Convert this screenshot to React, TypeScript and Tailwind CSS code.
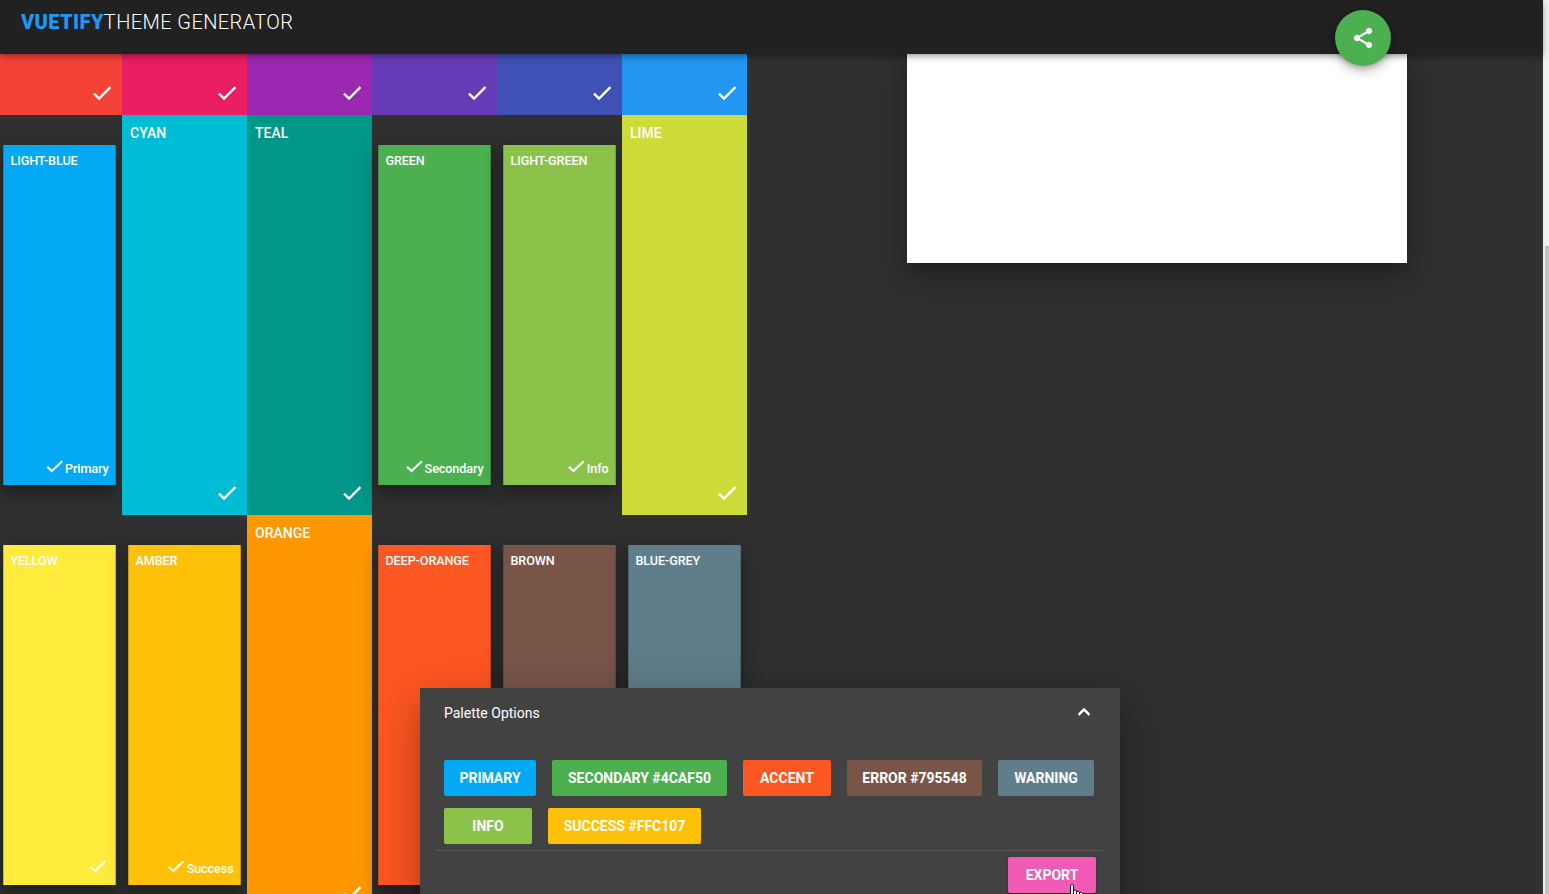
type Swatch = { name: string; bg: string; selected?: boolean; role?: string };

const swatches: Swatch[] = [
  { name: "RED", bg: "bg-[#f44336]" },
  { name: "PINK", bg: "bg-[#e91e63]" },
  { name: "PURPLE", bg: "bg-[#9c27b0]" },
  { name: "DEEP-PURPLE", bg: "bg-[#673ab7]" },
  { name: "INDIGO", bg: "bg-[#3f51b5]" },
  { name: "BLUE", bg: "bg-[#2196f3]" },
  { name: "LIGHT-BLUE", bg: "bg-[#03a9f4]", selected: true, role: "Primary" },
  { name: "CYAN", bg: "bg-[#00bcd4]" },
  { name: "TEAL", bg: "bg-[#009688]" },
  { name: "GREEN", bg: "bg-[#4caf50]", selected: true, role: "Secondary" },
  { name: "LIGHT-GREEN", bg: "bg-[#8bc34a]", selected: true, role: "Info" },
  { name: "LIME", bg: "bg-[#cddc39]" },
  { name: "YELLOW", bg: "bg-[#ffeb3b]", selected: true },
  { name: "AMBER", bg: "bg-[#ffc107]", selected: true, role: "Success" },
  { name: "ORANGE", bg: "bg-[#ff9800]" },
  { name: "DEEP-ORANGE", bg: "bg-[#ff5722]", selected: true, role: "Accent" },
  { name: "BROWN", bg: "bg-[#795548]", selected: true, role: "Error" },
  { name: "BLUE-GREY", bg: "bg-[#607d8b]", selected: true, role: "Warning" },
];

const options = [
  { label: "PRIMARY", style: "bg-[#03a9f4] w-[92px]" },
  { label: "SECONDARY #4CAF50", style: "bg-[#4caf50] w-[175px]" },
  { label: "ACCENT", style: "bg-[#ff5722] w-[88px]" },
  { label: "ERROR #795548", style: "bg-[#795548] w-[135px]" },
  { label: "WARNING", style: "bg-[#607d8b] w-[96px]" },
  { label: "INFO", style: "bg-[#8bc34a] w-[88px]" },
  { label: "SUCCESS #FFC107", style: "bg-[#ffc107] w-[153px]" },
];

function Check() {
  return (
    <svg viewBox="0 0 24 24" className="size-6 shrink-0 fill-current stroke-current stroke-[0.5]">
      <path d="M9 16.17L4.83 12l-1.42 1.41L9 19 21 7l-1.41-1.41z" />
    </svg>
  );
}

function SwatchCard({ swatch }: { swatch: Swatch }) {
  return (
    <div
      className={`relative flex h-[400px] w-[125px] flex-col justify-between px-2 pt-2 pb-2.5 text-white ${swatch.bg} ${
        swatch.selected
          ? "scale-x-90 scale-y-85 tracking-[-0.1px] shadow-[0_7px_8px_-4px_rgba(0,0,0,.2),0_12px_17px_2px_rgba(0,0,0,.14),0_5px_22px_4px_rgba(0,0,0,.12)]"
          : ""
      }`}
    >
      <div className="text-sm leading-5 font-medium">{swatch.name}</div>
      <div className="flex h-6 items-center justify-end text-sm font-medium">
        <Check />
        {swatch.role && <span className="h-5 leading-[26px]">{swatch.role}</span>}
      </div>
    </div>
  );
}

export default function App() {
  return (
    <div className="relative flex h-[894px] w-[1549px] overflow-hidden bg-[#303030] font-[Roboto,sans-serif] text-white">
      <div className="flex h-full w-[1543px] shrink-0 flex-col">
        <header className="relative z-10 h-[54px] shrink-0 bg-[#212121] pt-[7px] pl-[21px] shadow-[0_2px_4px_-1px_rgba(0,0,0,.2),0_4px_5px_0_rgba(0,0,0,.14),0_1px_10px_0_rgba(0,0,0,.12)]">
          <h1 className="text-xl leading-[31px] font-light tracking-[.02em]">
            <span className="font-black text-[#2196f3]">VUETIFY</span>
            THEME GENERATOR
          </h1>
          <button className="absolute top-[10px] left-[1335px] flex size-14 items-center justify-center rounded-full bg-[#4caf50] shadow-[0_3px_5px_-1px_rgba(0,0,0,.2),0_6px_10px_0_rgba(0,0,0,.14),0_1px_18px_0_rgba(0,0,0,.12)]">
            <svg viewBox="0 0 24 24" className="size-6 fill-white stroke-white stroke-[0.4]">
              <path d="M18 16.08c-.76 0-1.44.3-1.96.77L8.91 12.7c.05-.23.09-.46.09-.7s-.04-.47-.09-.7l7.05-4.11c.54.5 1.25.81 2.04.81 1.66 0 3-1.34 3-3s-1.34-3-3-3-3 1.34-3 3c0 .24.04.47.09.7L8.04 9.81C7.5 9.31 6.79 9 6 9c-1.66 0-3 1.34-3 3s1.34 3 3 3c.79 0 1.5-.31 2.04-.81l7.12 4.16c-.05.21-.08.43-.08.65 0 1.61 1.31 2.92 2.92 2.92s2.92-1.31 2.92-2.92-1.31-2.92-2.92-2.92z" />
            </svg>
          </button>
        </header>
        <main className="flex min-h-0 flex-1 items-start">
          <section className="-mt-[339px] -ml-[3px] grid shrink-0 grid-cols-[repeat(6,125px)]">
            {swatches.map((s) => (
              <SwatchCard key={s.name} swatch={s} />
            ))}
          </section>
          <section className="ml-[160px] h-[209px] w-[500px] bg-white shadow-[0_8px_10px_-5px_rgba(0,0,0,.2),0_16px_24px_2px_rgba(0,0,0,.14),0_6px_30px_5px_rgba(0,0,0,.12)]" />
        </main>
      </div>
      <aside className="flex w-1.5 justify-end bg-[#f0f0f0] pt-[246px]">
        <div className="h-full w-1 bg-[#c1c1c1]" />
      </aside>

      <section className="absolute top-[688px] left-[420px] z-20 flex h-[230px] w-[700px] flex-col bg-[#424242] px-4 shadow-[0_11px_15px_-7px_rgba(0,0,0,.2),0_24px_38px_3px_rgba(0,0,0,.14),0_9px_46px_8px_rgba(0,0,0,.12)]">
        <div className="flex h-12 items-center justify-between px-2 pt-0.5 text-sm">
          <span>Palette Options</span>
          <svg viewBox="0 0 24 24" className="mb-0.5 size-6 fill-white stroke-white stroke-[0.6]">
            <path d="M7.41 15.41L12 10.83l4.59 4.58L18 14l-6-6-6 6z" />
          </svg>
        </div>
        <div className="flex flex-wrap gap-x-4 gap-y-3 pt-6 pl-2">
          {options.map((o) => (
            <button
              key={o.label}
              className={`flex h-9 items-center justify-center rounded-xs text-sm font-bold whitespace-nowrap ${o.style}`}
            >
              {o.label}
            </button>
          ))}
        </div>
        <div className="mt-1.5 border-t border-[#5a5a5a]" />
        <div className="flex justify-end pt-1.5 pr-2">
          <button className="flex h-9 w-[88px] items-center justify-center rounded-xs bg-[#f15bb5] text-sm font-bold shadow-[0_3px_1px_-2px_rgba(0,0,0,.2),0_2px_2px_0_rgba(0,0,0,.14),0_1px_5px_0_rgba(0,0,0,.12)]">
            EXPORT
          </button>
        </div>
      </section>

      <svg
        viewBox="0 0 17 22"
        className="absolute top-[884px] left-[1066px] z-30 h-[22px] w-[17px] fill-white stroke-black"
      >
        <path d="M4.5 13.5V2c0-2 3-2 3 0v5c0-1 3-1 3 .5V8c0-1 3-1 3 .5V9c0-1 3-1 3 1v6c0 3-1 5-2 5.500H7L1 13c-1-2 1-3 3.500 .5z" />
        <path d="M7.500 7v4M10.500 8v3M13.500 9v2" />
      </svg>
    </div>
  );
}
